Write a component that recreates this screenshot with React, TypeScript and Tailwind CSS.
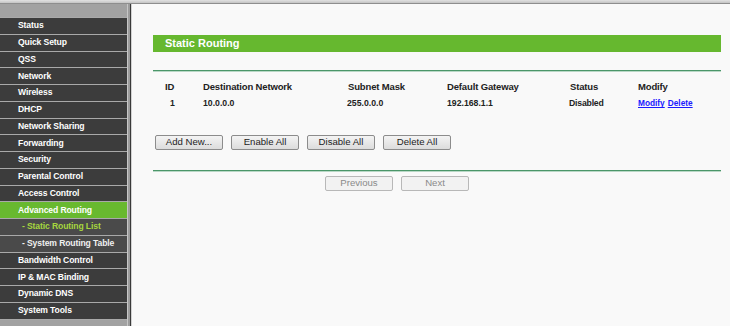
import React from "react";

const menu = [
  { label: "Status" },
  { label: "Quick Setup" },
  { label: "QSS" },
  { label: "Network" },
  { label: "Wireless" },
  { label: "DHCP" },
  { label: "Network Sharing" },
  { label: "Forwarding" },
  { label: "Security" },
  { label: "Parental Control" },
  { label: "Access Control" },
  { label: "Advanced Routing", active: true },
  { label: "- Static Routing List", sub: true, current: true },
  { label: "- System Routing Table", sub: true },
  { label: "Bandwidth Control" },
  { label: "IP & MAC Binding" },
  { label: "Dynamic DNS" },
  { label: "System Tools" },
];

function Sidebar() {
  return (
    <div className="flex w-[132px] shrink-0">
      <div className="flex w-[127px] flex-col bg-[#a2a2a2]">
        <div className="h-[13px]" />
        {menu.map((m) => {
          let cls = "bg-[#3c3c3c] text-white pl-[18px]";
          if (m.active) cls = "bg-[#68b92f] text-white pl-[18px]";
          if (m.sub) cls = "bg-[#4a4a4a] pl-[22px] " + (m.current ? "text-[#a6d63e]" : "text-[#f0f0f0]");
          return (
            <div
              key={m.label}
              className={"flex h-[16.75px] items-center border-t border-[#a9a9a9] text-[8.6px] font-bold tracking-[-0.12px] " + cls}
            >
              {m.label}
            </div>
          );
        })}
        <div className="flex-1 border-t border-[#a9a9a9]" />
      </div>
      <div className="w-px bg-[#c6c6c6]" />
      <div className="w-[2px] bg-[#9c9c9c]" />
      <div className="w-px bg-[#3a3a3a]" />
      <div className="w-px bg-[#d2d2d2]" />
    </div>
  );
}

function Btn({ children, disabled }: { children: React.ReactNode; disabled?: boolean }) {
  return (
    <div
      className={
        "flex h-[15px] w-[68px] items-center justify-center rounded-[2px] border text-[9.6px] " +
        (disabled
          ? "border-[#b8b8b8] bg-[#f2f2f2] text-[#8a8a8a]"
          : "border-[#8c8c8c] bg-gradient-to-b from-[#f4f4f4] to-[#dcdcdc] text-[#222]")
      }
    >
      {children}
    </div>
  );
}

function Line() {
  return (
    <div className="flex flex-col">
      <div className="h-px bg-[#4b9669]" />
      <div className="h-px bg-[#b9d8c6]" />
    </div>
  );
}

export default function App() {
  return (
    <div
      className="flex h-[326px] w-[730px] flex-col overflow-hidden bg-[#f9f9f9]"
      style={{ fontFamily: '"Liberation Sans", Arial, sans-serif' }}
    >
      <div className="h-[4px] shrink-0 border-b border-[#8e8e8e] bg-gradient-to-b from-[#e2e2e2] to-[#c4c4c4]" />
      <div className="flex flex-1">
        <Sidebar />
        <div className="flex flex-1 flex-col pl-[21px] pr-[9px] text-[#222]">
          <div className="mt-[31px] flex h-[17px] items-center bg-[#66b82f] pl-[12px] text-[11px] font-bold text-white">
            Static Routing
          </div>
          <div className="mt-[18px]">
            <Line />
          </div>

          <div className="mt-[7px] flex h-[16px] items-center text-[9.5px] font-bold tracking-[-0.15px] text-[#222]">
            <div className="w-[50px] pl-[12px]">ID</div>
            <div className="w-[145px]">Destination Network</div>
            <div className="w-[99px]">Subnet Mask</div>
            <div className="w-[123px]">Default Gateway</div>
            <div className="w-[68px]">Status</div>
            <div>Modify</div>
          </div>
          <div className="flex h-[17px] items-center text-[8.7px] font-bold text-[#222]">
            <div className="w-[50px] pl-[17px]">1</div>
            <div className="w-[144px]">10.0.0.0</div>
            <div className="w-[100px]">255.0.0.0</div>
            <div className="w-[122px]">192.168.1.1</div>
            <div className="w-[69px] tracking-[-0.2px]">Disabled</div>
            <div className="flex gap-[3px] text-[8.3px] text-[#1a1aff]">
              <span className="underline">Modify</span>
              <span className="underline">Delete</span>
            </div>
          </div>

          <div className="mt-[23px] flex gap-[8px] pl-[2px]">
            <Btn>Add New...</Btn>
            <Btn>Enable All</Btn>
            <Btn>Disable All</Btn>
            <Btn>Delete All</Btn>
          </div>

          <div className="mt-[20px]">
            <Line />
          </div>

          <div className="mt-[4px] flex gap-[8px] pl-[172px]">
            <Btn disabled>Previous</Btn>
            <Btn disabled>Next</Btn>
          </div>
        </div>
      </div>
    </div>
  );
}
